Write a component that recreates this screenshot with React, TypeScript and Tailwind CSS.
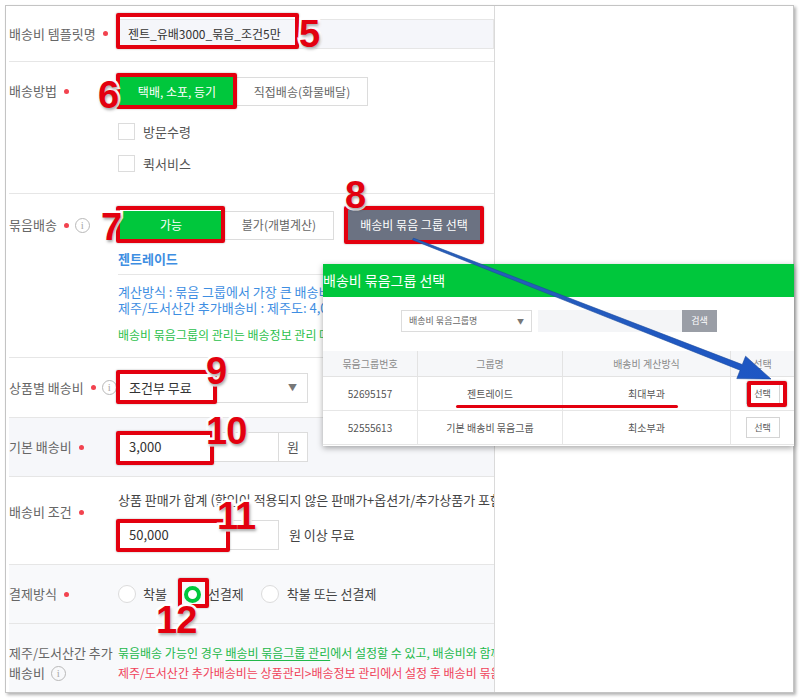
import React from "react";

const KR = "font-['Noto_Sans_CJK_KR','Noto_Sans',sans-serif]";

function Dot() {
  return <span className="ml-[7px] inline-block h-[5px] w-[5px] shrink-0 rounded-full bg-[#f2434f]" />;
}

function Info() {
  return (
    <span className="ml-[6px] inline-flex h-[15px] w-[15px] shrink-0 items-center justify-center rounded-full border border-[#b8b8b8] font-['Liberation_Serif',serif] text-[11px] leading-none text-[#aaa]">
      i
    </span>
  );
}

function Label({ children, className = "" }: { children: React.ReactNode; className?: string }) {
  return (
    <div className={`flex w-[109px] shrink-0 items-center text-[13px] text-[#666] ${className}`}>{children}</div>
  );
}

function Num({ n, className }: { n: string; className: string }) {
  return (
    <span
      className={`absolute font-['Liberation_Sans',sans-serif] text-[38px] font-bold leading-none tracking-[-1px] text-[#e3000f] [-webkit-text-stroke:5px_white] [paint-order:stroke_fill] [text-shadow:1px_2px_3px_rgba(0,0,0,0.35)] ${className}`}
    >
      {n}
    </span>
  );
}

function RedBox({ className }: { className: string }) {
  return (
    <div
      className={`pointer-events-none absolute rounded-[2px] border-[4px] border-[#e3000f] shadow-[0_0_2px_rgba(0,0,0,0.35)] ${className}`}
    />
  );
}

function Radio({ on = false }: { on?: boolean }) {
  return on ? (
    <span className="inline-block h-[17px] w-[17px] rounded-full border-[4px] border-[#00c73c] bg-white" />
  ) : (
    <span className="inline-block h-[18px] w-[18px] rounded-full border border-[#dcdcdc] bg-white" />
  );
}

function GroupPopup() {
  const rows = [
    { no: "52695157", name: "젠트레이드", calc: "최대부과" },
    { no: "52555613", name: "기본 배송비 묶음그룹", calc: "최소부과" },
  ];
  return (
    <div className="absolute left-[323px] top-[264px] h-[182px] w-[471px] overflow-hidden bg-white shadow-[0_2px_6px_rgba(0,0,0,0.35)]">
      <div className="flex h-[33px] items-center bg-[#00c73c] text-[14px] text-white">배송비 묶음그룹 선택</div>

      <div className="flex pl-[78px] pt-[13px]">
        <div className="flex h-[22px] w-[131px] items-center justify-between border border-[#dcdcdc] px-[7px] text-[9px] text-[#666]">
          <span>배송비 묶음그룹명</span>
          <span className="text-[7px] text-[#777]">▼</span>
        </div>
        <div className="ml-[6px] h-[22px] w-[144px] bg-[#f4f5f7]" />
        <div className="flex h-[22px] w-[35px] items-center justify-center bg-[#9a9ea6] text-[9px] text-white">검색</div>
      </div>

      <div className="mt-[19px] text-[10px] text-[#555]">
        <div className="flex h-[26px] border-b border-[#e3e3e3] bg-[#f6f7f9] text-[#8a8a8a]">
          <div className="flex w-[95px] items-center justify-center border-r border-[#e3e3e3]">묶음그룹번호</div>
          <div className="flex w-[145px] items-center justify-center border-r border-[#e3e3e3]">그룹명</div>
          <div className="flex w-[168px] items-center justify-center border-r border-[#e3e3e3]">배송비 계산방식</div>
          <div className="flex flex-1 items-center justify-center">선택</div>
        </div>
        {rows.map((r) => (
          <div key={r.no} className="flex h-[34px] border-b border-[#e6e6e6]">
            <div className="flex w-[95px] items-center justify-center border-r border-[#e6e6e6]">{r.no}</div>
            <div className="flex w-[145px] items-center justify-center border-r border-[#e6e6e6]">{r.name}</div>
            <div className="flex w-[168px] items-center justify-center border-r border-[#e6e6e6]">{r.calc}</div>
            <div className="flex flex-1 items-center justify-center">
              <span className="flex h-[21px] w-[34px] items-center justify-center border border-[#d4d4d4] text-[9px]">선택</span>
            </div>
          </div>
        ))}
      </div>
    </div>
  );
}

function Arrow() {
  return (
    <svg className="pointer-events-none absolute left-0 top-0" width="800" height="698" viewBox="0 0 800 698">
      <defs>
        <linearGradient id="ag" x1="413" y1="239" x2="771" y2="379" gradientUnits="userSpaceOnUse">
          <stop offset="0" stopColor="#2a5fb8" />
          <stop offset="1" stopColor="#1d56c4" />
        </linearGradient>
      </defs>
      <polygon
        points="413.4,238.1 742.3,364.6 745.6,356.2 771,379 736.8,378.6 740.1,370.2 412.6,239.9"
        fill="url(#ag)"
        stroke="#1a4a9e"
        strokeWidth="0.6"
        strokeLinejoin="round"
      />
    </svg>
  );
}

export default function App() {
  return (
    <div className={`relative h-[698px] w-[800px] overflow-hidden bg-white pl-[5px] pt-[5px] ${KR}`}>
      <div className="flex h-[688px] w-[789px] border border-[#c4c4c4] bg-white shadow-[2px_2px_3px_rgba(0,0,0,0.3)]">
        {/* form panel */}
        <div className="w-[489px] shrink-0 overflow-hidden border-r border-[#dadada] pl-[3px]">
          {/* 템플릿명 */}
          <div className="flex h-[56px] items-center border-b border-[#e6e6e6]">
            <Label>
              배송비 템플릿명<Dot />
            </Label>
            <div className="flex h-[30px] w-[400px] items-center border border-[#e6e6e6] bg-[#f5f6fa] pl-[9px] text-[12px] text-[#333]">
              젠트_유배3000_묶음_조건5만
            </div>
          </div>

          {/* 배송방법 */}
          <div className="flex h-[132px] border-b border-[#e6e6e6]">
            <Label className="mt-[20px] h-[18px] self-start">
              배송방법<Dot />
            </Label>
            <div className="pt-[15px]">
              <div className="flex h-[29px] text-[12px]">
                <div className="flex w-[118px] items-center justify-center bg-[#00c73c] text-white">택배, 소포, 등기</div>
                <div className="flex w-[132px] items-center justify-center border border-[#dcdcdc] text-[#666]">직접배송(화물배달)</div>
              </div>
              <div className="mt-[17px] flex h-[17px] items-center text-[13px] leading-[17px] text-[#555]">
                <span className="h-[17px] w-[17px] border border-[#dcdcdc] bg-white" />
                <span className="ml-[8px]">방문수령</span>
              </div>
              <div className="mt-[15px] flex h-[17px] items-center text-[13px] leading-[17px] text-[#555]">
                <span className="h-[17px] w-[17px] border border-[#dcdcdc] bg-white" />
                <span className="ml-[8px]">퀵서비스</span>
              </div>
            </div>
          </div>

          {/* 묶음배송 */}
          <div className="flex h-[164px] border-b border-[#e6e6e6]">
            <Label className="mt-[22px] h-[18px] self-start">
              묶음배송<Dot />
              <Info />
            </Label>
            <div className="flex-1 pt-[16px]">
              <div className="flex items-center text-[12px]">
                <div className="flex h-[29px] w-[106px] items-center justify-center bg-[#00c73c] text-white">가능</div>
                <div className="flex h-[29px] w-[110px] items-center justify-center border border-[#dcdcdc] text-[#666]">불가(개별계산)</div>
                <div className="ml-[14px] flex h-[30px] w-[132px] items-center justify-center bg-[#6b7282] text-white">배송비 묶음 그룹 선택</div>
              </div>
              <div className="mt-[10px] border-b border-[#e6e6e6] pb-[6px] text-[13px] font-bold leading-[18px] text-[#3e8ee2]">젠트레이드</div>
              <div className="mt-[9px] whitespace-nowrap text-[13px] leading-[16px] text-[#3e8ee2]">
                <div>계산방식 : 묶음 그룹에서 가장 큰 배송비로 부과</div>
                <div>제주/도서산간 추가배송비 : 제주도: 4,000원</div>
              </div>
              <div className="mt-[11px] whitespace-nowrap text-[12px] leading-[16px] text-[#2bbf4b]">
                배송비 묶음그룹의 관리는 배송정보 관리 메뉴에서 할 수 있습니다.
              </div>
            </div>
          </div>

          {/* 상품별 배송비 */}
          <div className="flex h-[60px] items-center border-b border-[#e6e6e6]">
            <Label>
              상품별 배송비<Dot />
              <Info />
            </Label>
            <div className="flex h-[30px] w-[190px] items-center justify-between border border-[#dcdcdc] bg-white pl-[10px] pr-[10px] text-[13px] text-[#333]">
              <span>조건부 무료</span>
              <span className="text-[9px] text-[#777]">▼</span>
            </div>
          </div>

          {/* 기본 배송비 */}
          <div className="flex h-[59px] items-center border-b border-[#e6e6e6] bg-[#f6f7fa]">
            <Label>
              기본 배송비<Dot />
            </Label>
            <div className="flex h-[30px] text-[13px] text-[#333]">
              <div className="flex w-[161px] items-center border border-[#dcdcdc] bg-white pl-[10px]">3,000</div>
              <div className="flex w-[29px] items-center justify-center border border-l-0 border-[#dcdcdc] bg-white text-[#555]">원</div>
            </div>
          </div>

          {/* 배송비 조건 */}
          <div className="flex h-[88px] border-b border-[#e6e6e6]">
            <Label className="mt-[26px] h-[18px] self-start">
              배송비 조건<Dot />
            </Label>
            <div className="pt-[14px]">
              <div className="whitespace-nowrap text-[13px] leading-[18px] text-[#444]">
                상품 판매가 합계 (할인이 적용되지 않은 판매가+옵션가/추가상품가 포함)
              </div>
              <div className="mt-[11px] flex h-[30px] items-center text-[13px] text-[#333]">
                <div className="flex h-[30px] w-[161px] items-center border border-[#dcdcdc] bg-white pl-[10px]">50,000</div>
                <span className="ml-[10px] text-[#444]">원 이상 무료</span>
              </div>
            </div>
          </div>

          {/* 결제방식 */}
          <div className="flex h-[59px] items-center border-b border-[#e6e6e6] bg-[#f8f9fb]">
            <Label>
              결제방식<Dot />
            </Label>
            <div className="flex items-center text-[13px] text-[#444]">
              <Radio />
              <span className="ml-[7px]">착불</span>
              <span className="ml-[17px] flex">
                <Radio on />
              </span>
              <span className="ml-[7px]">선결제</span>
              <span className="ml-[17px] flex">
                <Radio />
              </span>
              <span className="ml-[8px]">착불 또는 선결제</span>
            </div>
          </div>

          {/* 제주/도서산간 */}
          <div className="flex h-[68px] bg-[#f8f9fb] pt-[19px]">
            <div className="w-[109px] shrink-0 text-[13px] leading-[20px] text-[#666]">
              <div>제주/도서산간 추가</div>
              <div className="flex items-center">
                배송비
                <Info />
              </div>
            </div>
            <div className="whitespace-nowrap text-[12px] leading-[20px]">
              <div className="text-[#22b84a]">
                묶음배송 가능인 경우 <span className="underline underline-offset-2">배송비 묶음그룹 관리</span>에서 설정할 수 있고, 배송비와 함께 부과됩니다.
              </div>
              <div className="text-[#f0435a]">
                제주/도서산간 추가배송비는 상품관리&gt;배송정보 관리에서 설정 후 배송비 묶음그룹에 적용됩니다.
              </div>
            </div>
          </div>
        </div>
        <div className="flex-1" />
      </div>

      <GroupPopup />

      {/* annotations */}
      <RedBox className="left-[116px] top-[13px] h-[36px] w-[183px]" />
      <RedBox className="left-[116px] top-[73px] h-[36px] w-[121px]" />
      <RedBox className="left-[116px] top-[206px] h-[37px] w-[109px]" />
      <RedBox className="left-[344px] top-[206px] h-[38px] w-[140px]" />
      <RedBox className="left-[116px] top-[370px] h-[34px] w-[101px]" />
      <RedBox className="left-[116px] top-[431px] h-[34px] w-[98px]" />
      <RedBox className="left-[116px] top-[519px] h-[33px] w-[114px]" />
      <RedBox className="left-[178px] top-[578px] h-[30px] w-[31px]" />
      <RedBox className="left-[747px] top-[381px] h-[26px] w-[40px]" />
      <div className="absolute left-[456px] top-[405px] h-[3px] w-[222px] rounded-full bg-[#e3000f]" />

      <Arrow />

      <Num n="5" className="left-[299px] top-[15px]" />
      <Num n="6" className="left-[98px] top-[76px]" />
      <Num n="7" className="left-[101px] top-[208px]" />
      <Num n="8" className="left-[345px] top-[176px]" />
      <Num n="9" className="left-[206px] top-[352px]" />
      <Num n="10" className="left-[206px] top-[412px]" />
      <Num n="11" className="left-[217px] top-[497px]" />
      <Num n="12" className="left-[156px] top-[601px]" />
    </div>
  );
}
